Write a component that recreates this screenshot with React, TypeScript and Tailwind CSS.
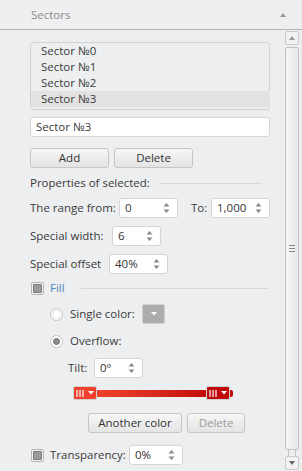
import React from 'react'

function Arrows() {
  return (
    <svg width="7" height="12" viewBox="0 0 7 12" className="shrink-0">
      <path d="M3.5 1 L6.5 4.5 L0.5 4.5 Z" fill="#8a8a8a" />
      <path d="M3.5 11 L6.5 7.5 L0.5 7.5 Z" fill="#8a8a8a" />
    </svg>
  )
}

function Spinner({ value, w }: { value: string; w: string }) {
  return (
    <div className={`flex h-[20px] shrink-0 items-center justify-between rounded-[3px] border border-[#d5d5d5] bg-white pl-[5px] pr-[7px] ${w}`}>
      <span className="text-[#333]">{value}</span>
      <Arrows />
    </div>
  )
}

function Btn({ children, w, disabled }: { children: React.ReactNode; w: string; disabled?: boolean }) {
  return (
    <div
      className={`flex h-[20px] items-center justify-center rounded-[3px] border border-[#c6c6c6] bg-gradient-to-b from-[#f6f6f6] to-[#e4e4e4] ${w} ${disabled ? 'text-[#9a9a9a]' : 'text-[#333]'}`}
    >
      {children}
    </div>
  )
}

function Check() {
  return (
    <div className="flex h-[13px] w-[13px] shrink-0 items-center justify-center rounded-[2px] border border-[#b4b4b4] bg-[#f4f4f4]">
      <div className="h-[9px] w-[9px] rounded-[1px] border border-[#7c7c7c] bg-[#9a9a9a]" />
    </div>
  )
}

function Radio({ on }: { on?: boolean }) {
  return (
    <div className="flex h-[13px] w-[13px] shrink-0 items-center justify-center rounded-full border border-[#c2c2c2] bg-white">
      {on ? (
        <div className="h-[7px] w-[7px] rounded-full border border-[#6d6d6d] bg-[#8c8c8c]" />
      ) : (
        <div className="h-[9px] w-[9px] rounded-full border border-[#e6e6e6]" />
      )}
    </div>
  )
}

function Handle({ bg }: { bg: string }) {
  return (
    <div className={`flex h-[14px] w-[24px] items-center justify-center gap-[3px] rounded-[2px] border border-[#d0d0d0] ${bg}`}>
      <svg width="9" height="7" viewBox="0 0 9 7">
        <path d="M1 0 V7 M4 0 V7 M7 0 V7" stroke="#fff" strokeWidth="1.2" />
      </svg>
      <svg width="6" height="4" viewBox="0 0 6 4">
        <path d="M0 0 H6 L3 3.5 Z" fill="#fff" />
      </svg>
    </div>
  )
}

const sectors = ['Sector №0', 'Sector №1', 'Sector №2', 'Sector №3']

export default function App() {
  return (
    <div className="relative h-[471px] w-[302px] overflow-hidden whitespace-nowrap bg-[#eceef0] text-[11.5px] leading-[16px] text-[#3b3b3b]" style={{ fontFamily: '"Open Sans", "Noto Sans", sans-serif' }}>
      <div className="flex h-[30px] items-center justify-between border-b border-[#b3b3b3] bg-[#eeeff1] pl-[31px] pr-[16px]">
        <span className="text-[#8a8a8a]">Sectors</span>
        <svg width="6" height="4" viewBox="0 0 6 4">
          <path d="M3 0 L6 4 H0 Z" fill="#9a9a9a" />
        </svg>
      </div>

      <div className="flex">
        <div className="flex w-[271px] flex-col pl-[30px]">
          <div className="mt-[12px] h-[68px] w-[240px] rounded-[3px] border border-[#d3d3d3]">
            {sectors.map((s, i) => (
              <div key={s} className={`h-[16px] pl-[10px] ${i === 3 ? 'mr-[-1px] bg-[#e2e2e2]' : ''}`}>
                {s}
              </div>
            ))}
          </div>

          <div className="mt-[7px] flex h-[20px] w-[240px] items-center rounded-[3px] border border-[#d5d5d5] bg-white pl-[5px]">
            Sector №3
          </div>

          <div className="mt-[11px] flex gap-[5px]">
            <Btn w="w-[79px]">Add</Btn>
            <Btn w="w-[79px]">Delete</Btn>
          </div>

          <div className="mt-[7px] flex h-[16px] items-center gap-[10px]">
            <span>Properties of selected:</span>
            <div className="h-px w-[102px] bg-[#d8d8d8]" />
          </div>

          <div className="mt-[7px] flex items-center">
            <span className="w-[89px] shrink-0">The range from:</span>
            <Spinner value="0" w="w-[59px]" />
            <span className="ml-[13px] w-[20px] shrink-0">To:</span>
            <Spinner value="1,000" w="w-[59px]" />
          </div>

          <div className="mt-[8px] flex items-center">
            <span className="w-[82px] shrink-0">Special width:</span>
            <Spinner value="6" w="w-[49px]" />
          </div>

          <div className="mt-[8px] flex items-center">
            <span className="w-[79px] shrink-0">Special offset</span>
            <Spinner value="40%" w="w-[59px]" />
          </div>

          <div className="mt-[6px] flex h-[16px] items-center">
            <div className="ml-px">
              <Check />
            </div>
            <span className="ml-[6px] text-[#4f86bd]">Fill</span>
            <div className="ml-[16px] h-px w-[187px] bg-[#d8d8d8]" />
          </div>

          <div className="mt-[8px] flex items-center pl-[20px]">
            <Radio />
            <span className="ml-[7px] w-[72px] shrink-0">Single color:</span>
            <div className="flex h-[20px] w-[23px] items-center justify-center rounded-[2px] border border-[#d0d0d0] bg-[#acacac]">
              <svg width="6" height="4" viewBox="0 0 6 4">
                <path d="M0 0 H6 L3 3.5 Z" fill="#fff" />
              </svg>
            </div>
          </div>

          <div className="mt-[9px] flex h-[16px] items-center pl-[20px]">
            <Radio on />
            <span className="ml-[7px]">Overflow:</span>
          </div>

          <div className="mt-[9px] flex items-center pl-[38px]">
            <span className="w-[26px] shrink-0">Tilt:</span>
            <Spinner value="0°" w="w-[49px]" />
          </div>

          <div className="mt-[8px] flex items-center pl-[43px]">
            <Handle bg="bg-[#f0402e]" />
            <div className="h-[7px] w-[109px] bg-gradient-to-r from-[#f0402e] to-[#c40a0a]" />
            <Handle bg="bg-[#c00808]" />
            <div className="h-[7px] w-[3px] rounded-r-[2px] bg-[#c40a0a]" />
          </div>

          <div className="mt-[13px] flex gap-[5px] pl-[58px]">
            <Btn w="w-[94px]">Another color</Btn>
            <Btn w="w-[58px]" disabled>
              Delete
            </Btn>
          </div>

          <div className="mt-[12px] flex items-center">
            <div className="ml-px">
              <Check />
            </div>
            <span className="ml-[6px] w-[79px] shrink-0">Transparency:</span>
            <Spinner value="0%" w="w-[54px]" />
          </div>
        </div>

        <div className="ml-[14px] mt-px flex w-[14px] flex-col">
          <div className="flex h-[14px] items-center justify-center rounded-[2px] border border-[#c9c9c9] bg-[#f2f2f2]">
            <svg width="6" height="4" viewBox="0 0 6 4">
              <path d="M3 0 L6 4 H0 Z" fill="#9a9a9a" />
            </svg>
          </div>
          <div className="mt-[2px] flex h-[403px] items-center justify-center rounded-[2px] border border-[#c2c2c2] bg-gradient-to-r from-[#f6f6f6] to-[#e8e8e8]">
            <svg width="6" height="7" viewBox="0 0 6 7">
              <path d="M0 0.5 H6 M0 3.5 H6 M0 6.5 H6" stroke="#8a8a8a" strokeWidth="1" />
            </svg>
          </div>
          <div className="mx-[3px] h-[6px] border-x border-[#c2c2c2]" />
          <div className="flex h-[14px] items-center justify-center rounded-[2px] border border-[#c9c9c9] bg-[#f2f2f2]">
            <svg width="6" height="4" viewBox="0 0 6 4">
              <path d="M0 0 H6 L3 4 Z" fill="#666" />
            </svg>
          </div>
        </div>
      </div>
    </div>
  )
}
